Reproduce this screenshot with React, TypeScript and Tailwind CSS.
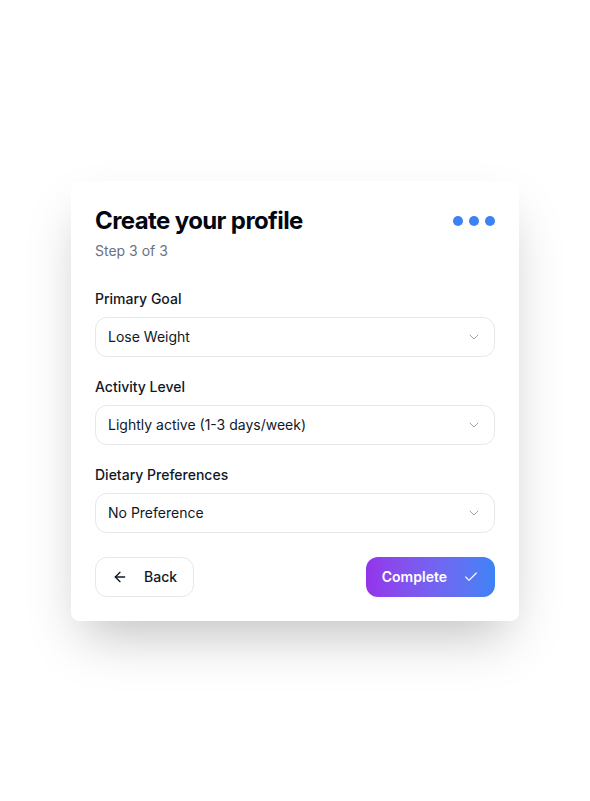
import React from "react";

const Chevron = () => (
  <svg width="16" height="16" viewBox="0 0 24 24" fill="none" stroke="#9ca3af" strokeWidth="1.5" strokeLinecap="round" strokeLinejoin="round">
    <path d="m6 9 6 6 6-6" />
  </svg>
);

const Field = ({ label, value }: { label: string; value: string }) => (
  <div>
    <div className="mb-2 text-sm font-medium leading-5 text-gray-900">{label}</div>
    <div className="flex h-10 items-center justify-between rounded-xl border border-gray-200 bg-white px-3 text-sm text-gray-900">
      <span>{value}</span>
      <Chevron />
    </div>
  </div>
);

export default function App() {
  return (
    <div className="flex min-h-screen items-center justify-center bg-white" style={{ fontFamily: "Inter, 'Noto Sans', sans-serif" }}>
      <div className="w-[448px] rounded-lg bg-white p-6 shadow-2xl">
        <div className="mb-7 flex items-start justify-between">
          <div>
            <h1 className="text-2xl font-bold leading-8 tracking-tight text-gray-950">Create your profile</h1>
            <p className="mt-1 text-sm leading-5 text-gray-500">Step 3 of 3</p>
          </div>
          <div className="mt-[11px] flex gap-1.5">
            <span className="h-2.5 w-2.5 rounded-full bg-[#3b82f6]" />
            <span className="h-2.5 w-2.5 rounded-full bg-[#3b82f6]" />
            <span className="h-2.5 w-2.5 rounded-full bg-[#3b82f6]" />
          </div>
        </div>
        <div className="flex flex-col gap-5">
          <Field label="Primary Goal" value="Lose Weight" />
          <Field label="Activity Level" value="Lightly active (1-3 days/week)" />
          <Field label="Dietary Preferences" value="No Preference" />
        </div>
        <div className="mt-6 flex items-center justify-between">
          <button className="flex h-10 items-center gap-4 rounded-xl border border-gray-200 bg-white px-4 text-sm font-medium text-gray-900">
            <svg width="16" height="16" viewBox="0 0 24 24" fill="none" stroke="currentColor" strokeWidth="2" strokeLinecap="round" strokeLinejoin="round">
              <path d="m12 19-7-7 7-7" />
              <path d="M19 12H5" />
            </svg>
            <span>Back</span>
          </button>
          <button className="flex h-10 items-center gap-4 rounded-xl bg-gradient-to-r from-[#9333ea] to-[#3b82f6] px-4 text-sm font-semibold text-white">
            <span>Complete</span>
            <svg width="16" height="16" viewBox="0 0 24 24" fill="none" stroke="currentColor" strokeWidth="1.75" strokeLinecap="round" strokeLinejoin="round">
              <path d="M20 6 9 17l-5-5" />
            </svg>
          </button>
        </div>
      </div>
    </div>
  );
}
